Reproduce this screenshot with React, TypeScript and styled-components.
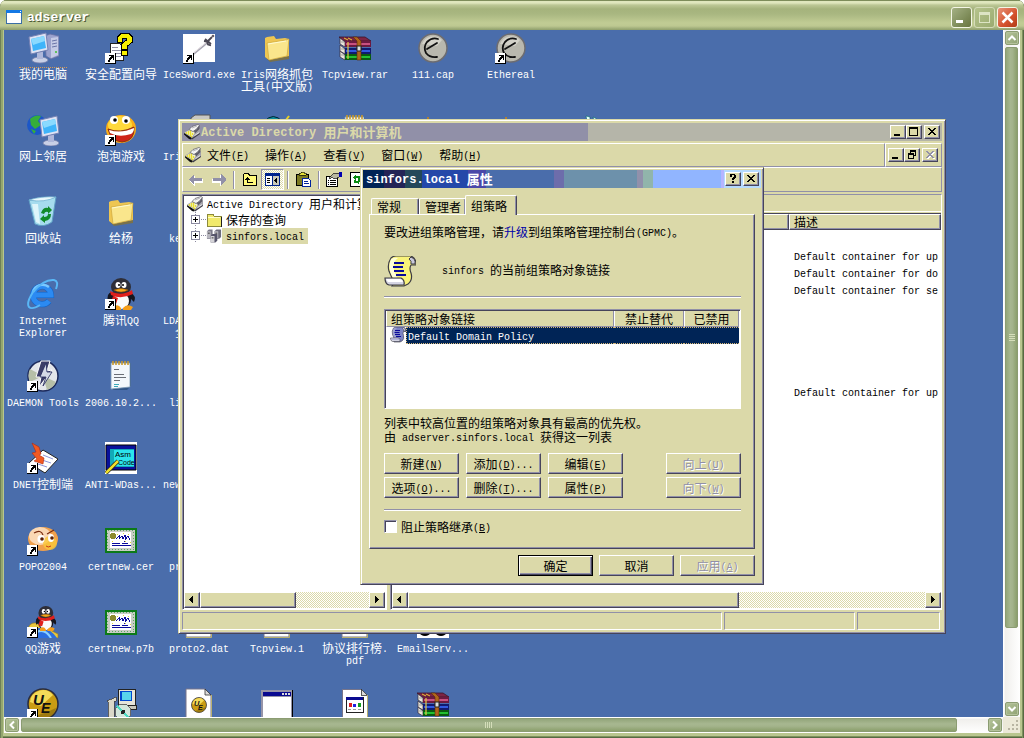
import React from "react";
import styled, { createGlobalStyle, css } from "styled-components";

const c = {
  face: "#dbd9a9",
  white: "#ffffff",
  shadow: "#9190a8",
  dark: "#46445a",
  desk: "#4a6dab",
  select: "#002456",
};

const GlobalStyle = createGlobalStyle`
  *, *::before, *::after { box-sizing: border-box; }
  html, body { margin: 0; background: #fff; }
  body {
    font-family: "Noto Sans CJK SC", sans-serif;
    font-size: 12px;
    line-height: 16px;
    color: #000;
  }
  button, input { font: inherit; color: inherit; margin: 0; }
  h1, h2, p { margin: 0; font-size: inherit; font-weight: inherit; }
`;

/* ---------- text: CJK runs at 12px, Latin runs in a half-width mono ---------- */

const Cjk = styled.span`
  line-height: 0;
`;
const Latin = styled.span<{ $size: number }>`
  font-family: "Liberation Mono", monospace;
  font-size: ${(p) => p.$size}px;
  line-height: 0;
  vertical-align: 1px;
`;

function T({ children, size = 10 }: { children: string; size?: number }) {
  const runs = children.split(/([^\x00-\x7f]+)/).filter(Boolean);
  return (
    <>
      {runs.map((run, i) => {
        if (/[^\x00-\x7f]/.test(run)) return <Cjk key={i}>{run}</Cjk>;
        const at = run.indexOf("&");
        return (
          <Latin key={i} $size={size}>
            {at < 0 ? (
              run
            ) : (
              <>
                {run.slice(0, at)}
                <u>{run[at + 1]}</u>
                {run.slice(at + 2)}
              </>
            )}
          </Latin>
        );
      })}
    </>
  );
}

/* ---------- shared bevels ---------- */

const raised = css`
  border: 1px solid;
  border-color: ${c.white} ${c.dark} ${c.dark} ${c.white};
  box-shadow: inset -1px -1px 0 ${c.shadow};
  background: ${c.face};
`;
const windowEdge = css`
  border: 1px solid;
  border-color: ${c.face} ${c.dark} ${c.dark} ${c.face};
  box-shadow: inset 1px 1px 0 ${c.white}, inset -1px -1px 0 ${c.shadow};
  background: ${c.face};
`;
const sunken = css`
  border: 1px solid;
  border-color: ${c.shadow} ${c.white} ${c.white} ${c.shadow};
`;
const dither = css`
  background: conic-gradient(#fff 25%, ${c.face} 0 50%, #fff 0 75%, ${c.face} 0) 0 0 / 2px 2px;
`;

/* ---------- remote session frame ---------- */

const Frame = styled.main`
  height: 100vh;
  display: flex;
  flex-direction: column;
  overflow: hidden;
  border-radius: 7px 7px 0 0;
  background: #b9c68f;
  box-shadow: inset 1px 0 0 #6e8057, inset -1px 0 0 #566a42, inset 3px 0 0 #94a66e,
    inset -2px 0 0 #7e915d, inset 0 -1px 0 #566a42, inset 0 -2px 0 #7e915d;
  padding: 0 4px 5px;
`;
const FrameTitle = styled.header`
  height: 30px;
  flex: none;
  display: flex;
  align-items: center;
  margin: 0 -4px;
  padding: 4px 6px 0 6px;
  background: linear-gradient(
    #7d8c5a 0 1px,
    #dfe6bd 1px 3px,
    #bcc795 5px,
    #a5b37c 9px,
    #a9b781 14px,
    #c1cc94 23px,
    #bdc891 26px,
    #8e9e6b 30px
  );
`;
const FrameName = styled.h1`
  flex: 1;
  padding-left: 5px;
  font-weight: bold;
  color: #fff;
  text-shadow: 1px 1px 0 #4d5a35;
`;
const FrameButtons = styled.div`
  display: flex;
  gap: 2px;
`;
const FrameButton = styled.button<{ $tone: "normal" | "faded" | "close" }>`
  width: 21px;
  height: 21px;
  padding: 0;
  display: grid;
  place-items: center;
  border: 1px solid ${(p) => (p.$tone === "faded" ? "#d5dcb8" : "#f4f6e6")};
  border-radius: 3px;
  background: ${(p) =>
    p.$tone === "close"
      ? "linear-gradient(135deg, #e8947a, #d4512c 60%, #b03c17)"
      : p.$tone === "faded"
      ? "linear-gradient(135deg, #b5c38c, #9bab70)"
      : "linear-gradient(135deg, #a5b185, #7f8d5a 60%, #69753f)"};
`;
const FrameMain = styled.div`
  flex: 1;
  min-height: 0;
  display: grid;
  grid-template-columns: minmax(0, 1fr) 17px;
  grid-template-rows: minmax(0, 1fr) 16px;
`;
const XpTrack = styled.div<{ $vertical?: boolean }>`
  display: flex;
  flex-direction: ${(p) => (p.$vertical ? "column" : "row")};
  gap: 2px;
  padding: ${(p) => (p.$vertical ? "1px 2px" : "1px")};
  background: ${(p) =>
    p.$vertical ? "linear-gradient(90deg,#fff 1px,#f0efec 2px,#fff)" : "linear-gradient(#fff 1px,#f0efec 2px,#fff)"};
`;
const XpArrow = styled.button`
  flex: none;
  width: 14px;
  height: 14px;
  padding: 0;
  display: grid;
  place-items: center;
  border: 1px solid #8b9c72;
  border-radius: 2px;
  background: linear-gradient(135deg, #b5c49a, #8fa272);
  box-shadow: inset 0 0 0 1px #b4c29b;
`;
const XpRail = styled.div<{ $vertical?: boolean }>`
  flex: 1;
  min-width: 0;
  min-height: 0;
  display: flex;
  flex-direction: ${(p) => (p.$vertical ? "column" : "row")};
`;
const XpThumb = styled.div<{ $vertical?: boolean; $share: number }>`
  flex: 0 0 ${(p) => p.$share}%;
  display: grid;
  place-items: center;
  border: 1px solid #8b9c72;
  border-radius: 2px;
  background: linear-gradient(${(p) => (p.$vertical ? "90deg" : "180deg")}, #93a57a, #a7b790 40%, #a3b38b 60%, #8b9f6c);
`;
const Corner = styled.div`
  display: grid;
  place-items: end;
  padding: 1px;
  background: #ece9d8;
`;

/* ---------- desktop ---------- */

const Desktop = styled.section`
  position: relative;
  overflow: hidden;
  background: ${c.desk};
`;
const IconGrid = styled.div`
  display: grid;
  grid-template-columns: repeat(8, 78px);
  grid-template-rows: repeat(9, 82px);
`;
const Shortcut = styled.div<{ $col: number; $row: number }>`
  grid-column: ${(p) => p.$col};
  grid-row: ${(p) => p.$row};
  display: flex;
  flex-direction: column;
  align-items: center;
  gap: 3px;
  padding-top: 2px;
  svg {
    display: block;
    flex: none;
  }
`;
const Label = styled.span<{ $width?: number; $focus?: boolean }>`
  color: #fff;
  line-height: 12px;
  white-space: pre;
  text-align: ${(p) => (p.$width ? "left" : "center")};
  width: ${(p) => (p.$width ? `${p.$width}px` : "auto")};
  border-top: 1px ${(p) => (p.$focus ? "dotted #d59a54" : "solid transparent")};
`;

/* ---------- management console ---------- */

const ConsoleWindow = styled.section`
  ${windowEdge}
  position: absolute;
  left: 174px;
  top: 89px;
  width: 768px;
  height: 515px;
  padding: 3px;
  display: flex;
  flex-direction: column;
`;
const CaptionBar = styled.header<{ $active?: boolean }>`
  flex: none;
  height: 18px;
  display: flex;
  align-items: center;
  padding: 0 2px;
  font-weight: bold;
  color: ${(p) => (p.$active ? "#fff" : c.face)};
  background: ${(p) =>
    p.$active
      ? `linear-gradient(90deg, #002456 21px, #242456 0 42px, #24485a 0 59px, #2448a9 0 105px,
          #4a48a9 0 123px, #4a6dab 0 191px, #6d6dab 0 201px, #6d91ab 0 274px, #9191ab 0 280px,
          #91b5ab 0 290px, #91b5ff 0 358px, #b5b5ff 0 361px, #b5daff 0)`
      : `linear-gradient(90deg, ${c.shadow} 406px, #b5b5a9 0)`};
  svg {
    flex: none;
  }
`;
const CaptionText = styled.h2`
  flex: 1;
  font-size: 13px;
  font-weight: bold;
  white-space: pre;
  padding-left: 1px;
`;
const CaptionButtons = styled.div`
  display: flex;
  button:last-child {
    margin-left: 2px;
  }
`;
const CaptionButton = styled.button`
  ${raised}
  width: 16px;
  height: 14px;
  padding: 0;
  display: grid;
  place-items: center;
`;
const MenuBand = styled.div`
  flex: none;
  height: 24px;
  margin-top: 2px;
  display: flex;
`;
const MenuBar = styled.nav`
  flex: 1;
  display: flex;
  align-items: center;
  gap: 16px;
  padding: 0 2px;
  border: 1px solid;
  border-color: ${c.white} ${c.shadow} ${c.shadow} ${c.white};
`;
const MenuItem = styled.button`
  border: 0;
  padding: 0;
  background: none;
  white-space: nowrap;
`;
const MenuIcon = styled.span`
  display: flex;
  width: 16px;
  margin-right: -10px;
`;
const MdiButtons = styled(CaptionButtons)`
  align-items: center;
  padding: 0 3px 0 2px;
  border: 1px solid;
  border-color: ${c.white} ${c.shadow} ${c.shadow} ${c.white};
`;
const ToolBar = styled.div`
  flex: none;
  height: 25px;
  display: flex;
  align-items: center;
  padding-left: 1px;
  border: 1px solid;
  border-color: ${c.white} ${c.shadow} ${c.shadow} ${c.white};
`;
const ToolButton = styled.button<{ $pressed?: boolean }>`
  width: 23px;
  height: 21px;
  padding: 0;
  display: grid;
  place-items: center;
  border: 1px solid transparent;
  background: none;
  ${(p) => p.$pressed && sunken}
  ${(p) => p.$pressed && dither}
`;
const ToolSeparator = styled.span`
  width: 2px;
  height: 18px;
  margin: 0 3px;
  border-left: 1px solid ${c.shadow};
  border-right: 1px solid ${c.white};
`;
const Panes = styled.div`
  flex: 1;
  min-height: 0;
  display: flex;
  gap: 3px;
  margin: 2px 0;
`;
const pane = css`
  display: flex;
  flex-direction: column;
  border: 1px solid;
  border-color: ${c.shadow} ${c.white} ${c.white} ${c.shadow};
`;
const TreePane = styled.div`
  ${pane}
  flex: 0 0 205px;
  background: #fff;
  box-shadow: inset 1px 1px 0 ${c.dark};
  padding: 1px;
`;
const Tree = styled.ul`
  flex: 1;
  min-height: 0;
  overflow: hidden;
  list-style: none;
  margin: 0;
  padding: 0;
`;
const TreeRow = styled.li<{ $child?: boolean }>`
  height: 16px;
  display: flex;
  align-items: center;
  white-space: pre;
  padding-left: ${(p) => (p.$child ? 7 : 3)}px;
  svg {
    flex: none;
  }
`;
const TreeText = styled.span<{ $selected?: boolean }>`
  padding: 0 4px;
  background: ${(p) => (p.$selected ? c.face : "none")};
`;
const DetailPane = styled.div`
  ${pane}
  flex: 1;
  min-width: 0;
`;
const DetailBanner = styled.div`
  flex: none;
  height: 17px;
  border-bottom: 1px solid #fff;
`;
const DetailList = styled.div`
  flex: 1;
  min-height: 0;
  display: flex;
  flex-direction: column;
  margin-top: 1px;
  background: #fff;
  border: 0 solid ${c.dark};
  border-width: 1px 0 0 1px;
  padding-bottom: 1px;
`;
const TableBox = styled.div`
  flex: 1;
  min-height: 0;
  overflow: hidden;
`;
const DetailTable = styled.table`
  width: 100%;
  table-layout: fixed;
  border-collapse: separate;
  border-spacing: 0;
  th {
    ${raised}
    height: 16px;
    padding: 0 4px;
    line-height: 14px;
    font-weight: normal;
    text-align: left;
  }
  th:first-child {
    width: 397px;
  }
  td {
    height: 17px;
    padding: 0 5px;
    overflow: hidden;
    white-space: pre;
  }
`;
const ClassicScroll = styled.div`
  ${dither}
  flex: none;
  height: 16px;
  display: flex;
`;
const ScrollArrow = styled.button`
  ${raised}
  flex: none;
  width: 16px;
  padding: 0;
  display: grid;
  place-items: center;
`;
const ScrollRail = styled.div`
  flex: 1;
  display: flex;
`;
const ScrollThumb = styled.div<{ $share: number }>`
  ${raised}
  width: ${(p) => p.$share}%;
`;
const StatusBar = styled.footer`
  flex: none;
  height: 18px;
  display: flex;
  gap: 2px;
  padding-right: 2px;
`;
const StatusCell = styled.div<{ $width?: number }>`
  ${sunken}
  flex: ${(p) => (p.$width ? `0 0 ${p.$width}px` : "1")};
`;

/* ---------- property dialog ---------- */

const Dialog = styled.section`
  ${windowEdge}
  position: absolute;
  left: 356px;
  top: 137px;
  width: 404px;
  padding: 2px;
`;
const DialogBody = styled.div`
  padding: 7px 6px 6px;
`;
const Tabs = styled.div`
  display: flex;
  align-items: flex-end;
  height: 20px;
  padding-left: 2px;
  margin-bottom: -1px;
`;
const Tab = styled.button<{ $selected?: boolean; $width: number }>`
  position: relative;
  width: ${(p) => p.$width}px;
  height: ${(p) => (p.$selected ? 20 : 16)}px;
  margin: ${(p) => (p.$selected ? "0 0 0 -1px" : "0 0 1px")};
  padding: 0 5px;
  text-align: left;
  line-height: 15px;
  white-space: nowrap;
  border: 1px solid;
  border-color: #fff ${c.dark} transparent #fff;
  border-bottom: 0;
  border-radius: 2px 2px 0 0;
  box-shadow: inset -1px 0 0 ${c.shadow};
  background: ${c.face};
`;
const TabPanel = styled.div`
  border: 1px solid;
  border-color: #fff ${c.dark} ${c.dark} #fff;
  box-shadow: inset -1px -1px 0 ${c.shadow};
  padding: 9px 13px 15px 14px;
  display: flex;
  flex-direction: column;
`;
const Upgrade = styled.a`
  color: #0000a8;
  text-decoration: none;
`;
const PolicyRow = styled.div`
  display: flex;
  gap: 26px;
  padding: 16px 0 8px;
  line-height: 28px;
  svg {
    flex: none;
  }
`;
const Etched = styled.hr`
  width: 100%;
  height: 2px;
  margin: 0;
  border: 0;
  border-top: 1px solid ${c.shadow};
  border-bottom: 1px solid #fff;
`;
const LinkBox = styled.div`
  ${sunken}
  height: 100px;
  margin: 11px 0 7px;
  padding: 1px;
  box-shadow: inset 1px 1px 0 ${c.dark};
  background: #fff;
`;
const LinkTable = styled.table`
  width: 100%;
  table-layout: fixed;
  border-collapse: separate;
  border-spacing: 0;
  th {
    height: 16px;
    padding: 0;
    line-height: 14px;
    font-weight: normal;
    background: ${c.face};
    border-bottom: 1px solid ${c.shadow};
    border-right: 1px solid ${c.shadow};
    border-left: 1px solid #fff;
  }
  th:nth-child(1) {
    width: 228px;
    padding-left: 4px;
    text-align: left;
  }
  th:nth-child(2) {
    width: 70px;
  }
  td {
    height: 17px;
    padding: 0;
    color: #fff;
    background: ${c.select};
    border: 1px dotted #d8b878;
    border-width: 1px 0;
  }
  td:first-child {
    border: 0;
    background: #fff;
  }
`;
const LinkRow = styled.div`
  display: flex;
  height: 17px;
`;
const LinkIcon = styled.span`
  display: flex;
  width: 20px;
  padding-left: 4px;
`;
const LinkName = styled.span`
  flex: 1;
  line-height: 15px;
  white-space: pre;
  padding-left: 1px;
  background: ${c.select};
  border: 1px dotted #d8b878;
  border-right: 0;
`;
const Note = styled.p`
  line-height: 14px;
`;
const ButtonGrid = styled.div`
  display: grid;
  grid-template-columns: 75px 75px 75px 1fr;
  column-gap: 7px;
  row-gap: 3px;
  margin: 9px 0 11px;
  button:nth-child(4n) {
    justify-self: end;
  }
`;
const PushButton = styled.button<{ $primary?: boolean }>`
  ${raised}
  width: 75px;
  height: 21px;
  padding: 0;
  white-space: nowrap;
  ${(p) =>
    p.$primary &&
    css`
      border-color: #000;
      box-shadow: inset 1px 1px 0 #fff, inset -1px -1px 0 ${c.dark}, inset -2px -2px 0 ${c.shadow};
    `}
  &:disabled {
    color: ${c.shadow};
    text-shadow: 1px 1px 0 #fff;
  }
`;
const CheckRow = styled.label`
  display: flex;
  align-items: center;
  gap: 4px;
  height: 13px;
  margin-top: 9px;
`;
const CheckBox = styled.input`
  appearance: none;
  width: 13px;
  height: 13px;
  ${sunken}
  box-shadow: inset 1px 1px 0 ${c.dark};
  background: #fff;
`;
const DialogButtons = styled.div`
  display: flex;
  justify-content: flex-end;
  gap: 6px;
  margin-top: 6px;
`;

/* ---------- small glyphs ---------- */

const px = { shapeRendering: "crispEdges" as const };

const MinGlyph = () => (
  <svg width="12" height="10" {...px}><path d="M2 7h6v2H2z" /></svg>
);
const MaxGlyph = () => (
  <svg width="12" height="10" {...px}><path d="M1 0h9v9H1zM2 2v6h7V2z" fillRule="evenodd" /></svg>
);
const RestoreGlyph = () => (
  <svg width="12" height="10" {...px}>
    <path d="M4 0h6v6H8V5h1V2H5v1H4zM2 3h6v6H2zM3 5v3h4V5z" fillRule="evenodd" />
  </svg>
);
const closePath = "M2 1h2v1h1v1h2V2h1V1h2v1H9v1H8v1H7v1h1v1h1v1h1v1H8V7H7V6H5v1H4v1H2V7h1V6h1V5h1V4H4V3H3V2H2z";
const CloseGlyph = ({ faded }: { faded?: boolean }) => (
  <svg width="12" height="10" {...px}>
    {faded && <path d={closePath} fill="#fff" transform="translate(1 1)" />}
    <path d={closePath} fill={faded ? c.shadow : "#000"} />
  </svg>
);
const HelpGlyph = () => (
  <svg width="12" height="10" {...px}>
    <path d="M3 0h5v1h1v3H8v1H7v1H5V4h1V3h1V1H5v2H3zM5 7h2v2H5z" />
  </svg>
);
const TriLeft = () => (
  <svg width="8" height="8" {...px}><path d="M5 0v7H4V6H3V5H2V4H1V3h1V2h1V1h1V0z" /></svg>
);
const TriRight = () => (
  <svg width="8" height="8" {...px}><path d="M2 0v7h1V6h1V5h1V4h1V3H5V2H4V1H3V0z" /></svg>
);
const Chevron = ({ turn }: { turn: number }) => (
  <svg width="10" height="10" viewBox="0 0 10 10">
    <path d="M1.500 7L5 3.500L8.500 7" fill="none" stroke="#fff" strokeWidth="2" transform={`rotate(${turn} 5 5)`} />
  </svg>
);
const Grip = ({ turn = 0 }: { turn?: number }) => (
  <svg width="8" height="8" viewBox="0 0 8 8" {...px}>
    <path d="M0 1h1v6H0zM2 1h1v6H2zM4 1h1v6H4zM6 1h1v6H6z" fill="#d5deba" transform={`rotate(${turn} 4 4)`} />
  </svg>
);

const ConsoleIcon = () => (
  <svg width="16" height="16" viewBox="0 0 16 16">
    <path d="M0 9L8 14L7 15.500L5 15L0 10.500Z" fill="#111" />
    <path d="M7 13L16 8V10L8 15.500Z" fill="#3a3944" />
    <path d="M0 8.500L6 5L14 3L16 5V9L8 14Z" fill="#a3a2aa" />
    <path d="M1 8.500L6 6L11 8.500L8 13Z" fill="#f4f1c8" />
    <path d="M2 8.500h1v1H2zM4 7.500h1v1H4zM6 8.500h1v1H6zM4 9.500h1v1H4zM8 9.500h1v1H8zM6 10.500h1v1H6zM7 12h1v1H7zM6 6.500h1v1H6z" fill="#d9cc00" stroke="#e8df20" strokeWidth=".6" />
    <path d="M5 5.500L8 2.500L14 .5L15.500 1.500L12 5.500L9 7.500Z" fill="#f4f4f2" stroke="#66656f" strokeWidth=".8" />
    <path d="M8 4L13 2" stroke="#b7b6bd" />
    <path d="M15.500 1.500V5L11 9.500L10 7L12.500 5.500Z" fill="#5d5c68" />
    <path d="M10.500 11.500L15 8.500" stroke="#f0f0f0" strokeWidth=".8" />
  </svg>
);
const SmallFolder = () => (
  <svg width="16" height="14" viewBox="0 0 16 14" {...px}>
    <path d="M1 3l1-2h5l1 2h7v10H1z" fill="#f1ea6c" stroke="#8c8a3c" />
    <path d="M2 4h12v1H2z" fill="#fffcc8" />
    <path d="M15 4v10H2" fill="none" stroke="#222" />
  </svg>
);
const DomainIcon = () => (
  <svg width="16" height="16" viewBox="0 0 17 16">
    <path d="M1 3l2-2h4v8l-2 2H1z" fill="#7a7988" />
    <path d="M1 3h4v7H1z" fill="#b8b7bf" />
    <path d="M9 3l2-2h5v8l-2 2H9z" fill="#6d6c7c" />
    <path d="M9 3h4v7H9z" fill="#c0bfc6" />
    <path d="M5 8l2-2h5v7l-2 2H5z" fill="#55546a" />
    <path d="M5 8h4v7H5z" fill="#d5d4d8" />
    <path d="M6 10h2M2 5h2M10 5h2" stroke="#333" />
  </svg>
);
const Expander = () => (
  <svg width="15" height="16" {...px}>
    <path d="M.5 3.500h8v8h-8z" fill="#fff" stroke="#8b8aa0" />
    <path d="M2 7h5v1H2zM4 5h1v5H4z" />
    <path d="M10 7h1v1h-1zM12 7h1v1h-1zM14 7h1v1h-1zM4 0h1v1H4zM4 2h1v1H4zM4 13h1v1H4z" fill="#8b8aa0" />
  </svg>
);

const ToolArrow = ({ flip }: { flip?: boolean }) => (
  <svg width="14" height="12" viewBox="0 0 14 12" {...px}>
    <g transform={flip ? "translate(14) scale(-1 1)" : undefined}>
      <path d="M1 6l5-5v4h8v4H6v4L1 7z" fill="#fff" />
      <path d="M0 5l5-5v4h8v3H5v4L0 6z" fill={c.shadow} />
    </g>
  </svg>
);
const UpFolder = () => (
  <svg width="16" height="14" viewBox="0 0 16 14" {...px}>
    <path d="M1.500 3.500v-2l1-1h4l1 2h7v10h-13z" fill="#fff97a" stroke="#000" />
    <path d="M5 4h1v1h1v1h1v1H6v2h5v1H5V7H3V6h1V5h1z" />
  </svg>
);
const TreeToggle = () => (
  <svg width="15" height="13" viewBox="0 0 15 13" {...px}>
    <path d="M.5.5h14v12H.5z" fill="#fff" stroke="#00248c" />
    <path d="M1 1h13v2H1z" fill="#00248c" />
    <path d="M2 5h3v1H2zM2 7h3v1H2zM2 9h3v1H2z" />
    <path d="M7 3h1v9H7z" fill="#00248c" />
    <path d="M8 3h6v9H8z" fill="#c9c9b8" />
    <path d="M12 4v7l-3-3.500z" />
  </svg>
);
const Paste = () => (
  <svg width="16" height="15" viewBox="0 0 16 15" {...px}>
    <path d="M.5 2.500h12v11H.5z" fill="#7c7a22" stroke="#000" />
    <path d="M3 3h7V1H8V0H5v1H3z" fill="#e4e03a" stroke="#000" strokeWidth=".6" />
    <path d="M6.500 6.500h6l2 2v6h-8z" fill="#fff" stroke="#00249c" />
    <path d="M8 9h4v1H8zM8 11h5v1H8z" fill="#00249c" />
  </svg>
);
const Properties = () => (
  <svg width="17" height="15" viewBox="0 0 17 15" {...px}>
    <path d="M.5 4.500h11v10H.5z" fill="#fff" stroke="#000" />
    <path d="M2 8h1v1H2zM4 8h6v1H4zM2 10h1v1H2zM4 10h6v1H4zM2 12h1v1H2zM4 12h6v1H4z" />
    <path d="M3 6l4-4 6-1v4l-5 2-2-2-2 2z" fill="#b9b8a0" stroke="#222" strokeWidth=".8" />
    <path d="M13 0h3v5h-3z" fill="#0000b0" />
  </svg>
);
const Refresh = () => (
  <svg width="15" height="15" viewBox="0 0 15 15" {...px}>
    <path d="M.5.5h13v14H.5z" fill="#fff" stroke="#000" />
    <path d="M3 6l3-4v2h4v3H8V6H6v2zM11 8l-3 5v-2H4V8h2v1h2V7z" fill="#0a8c14" />
  </svg>
);

const Scroll = ({ size, blue }: { size: number; blue?: boolean }) => (
  <svg width={size} height={size} viewBox="0 0 32 32">
    <path d="M7 2Q9 0 12 0H27Q31 2 32 6V9H27Q25 12 27 17Q29 24 24 28L20 30H8Q10 27 8 22L5 15Q3 8 7 2Z" fill={blue ? "#7d84c4" : "#f8f27a"} stroke="#3b3a44" strokeWidth="1.200" />
    <path d="M7 3Q11 1 14 2Q8 6 10 14L13 22H9Q3 12 7 3Z" fill={blue ? "#9ba0d0" : "#fffed8"} />
    <path d="M27 1Q32 3 31 8H27Q28 5 25 3Z" fill="#c9c9dc" stroke="#3b3a44" strokeWidth="1" />
    <path d="M1 22H17Q21 24 20 29H5Q1 28 1 22Z" fill="#d4d4e2" stroke="#3b3a44" strokeWidth="1.200" />
    <path d="M2 23H16Q19 24 19 26H4Z" fill={blue ? "#b0b3dc" : "#fff"} />
    <path d="M10 7h10M9 11h10M10 15h10M12 19h10" stroke="#0a0a9a" strokeWidth="2" />
  </svg>
);

/* ---------- desktop icons ---------- */

const Lcd = () => (
  <>
    <ellipse cx="13" cy="28" rx="8" ry="3" fill="#c9d0e6" stroke="#7b84ad" strokeWidth=".8" />
    <path d="M10 20h6v7h-6z" fill="#aeb7da" />
    <path d="M2 5l17-4 2 17L4 22z" fill="#dde3f4" stroke="#7682b4" />
    <path d="M4 7l13-3 2 12L6 19z" fill="#3fb4fa" />
    <path d="M4 7l13-3 1 5L6 13z" fill="#8adaff" />
  </>
);
const Book = ({ y, a, b }: { y: number; a: string; b: string }) => (
  <>
    <path d={`M1 ${y}l5 4v5l-5-3z`} fill="#e9e6da" stroke="#33283a" strokeWidth=".7" />
    <path d={`M6 ${y + 3}H32V${y + 9}H6z`} fill={a} />
    <path d={`M7 ${y + 5}H31V${y + 7}H7z`} fill={b} />
    <path d={`M2 ${y + 4}h3`} stroke="#888" strokeWidth=".7" />
  </>
);
const Penguin = () => (
  <>
    <path d="M3 24Q1 15 7 14L25 14Q32 18 29 24L26 21H7Z" fill="#16161e" />
    <ellipse cx="16" cy="22" rx="10" ry="9" fill="#16161e" />
    <ellipse cx="16" cy="23" rx="8" ry="8" fill="#fafafa" />
    <ellipse cx="16" cy="9" rx="10" ry="9" fill="#2e2e38" />
    <ellipse cx="13" cy="7" rx="2.500" ry="3" fill="#fff" />
    <ellipse cx="19" cy="7" rx="2.500" ry="3" fill="#fff" />
    <circle cx="14" cy="7" r="1" /><circle cx="18" cy="7" r="1" />
    <path d="M9 12Q16 9 23 12Q16 16 9 12Z" fill="#f5a81c" stroke="#a85c00" strokeWidth=".5" />
    <path d="M5 13Q16 19 27 12L28 16Q16 22 6 17ZM8 18l5 2-2 6-5-1z" fill="#e0201c" />
    <path d="M8 29q5-4 8 1v2H8zM18 30q4-5 10-1l-2 3h-8z" fill="#f59d18" />
  </>
);
const CdFace = () => (
  <>
    <circle cx="16" cy="16" r="15" fill="#e4e6ea" stroke="#1c2a5c" strokeWidth="1.500" />
    <path d="M16 16L3 9A15 15 0 0 0 3 22ZM16 16L29 22A15 15 0 0 1 20 30Z" fill="#b6bfa8" />
  </>
);
const UeBadge = () => (
  <>
    <circle cx="16" cy="16" r="15" fill="#c99c14" stroke="#2a2c3c" strokeWidth="1.500" />
    <path d="M3 14A13 13 0 0 1 26 7L14 18Z" fill="#f3da58" />
    <path d="M29 20A13 13 0 0 1 8 28L20 24Z" fill="#8a6c10" opacity=".7" />
    <text x="6" y="17" fontFamily="Liberation Sans, sans-serif" fontSize="15" fontWeight="bold" fontStyle="italic" fill="#111">U</text>
    <text x="14" y="25" fontFamily="Liberation Sans, sans-serif" fontSize="14" fontWeight="bold" fontStyle="italic" fill="#111">E</text>
  </>
);
const Page = () => (
  <>
    <path d="M3 1H22L28 7V31H3Z" fill="#fff" stroke="#77758a" />
    <path d="M22 1V7H28Z" fill="#dadada" stroke="#333" strokeWidth=".8" />
    <path d="M28.500 7V31.500H3" stroke="#b8b070" fill="none" />
  </>
);

const art: Record<string, React.ReactNode> = {
  computer: (
    <>
      <path d="M18 4l5-2 9 2v20l-8 3-5-3z" fill="#9ba2cd" stroke="#6570a4" strokeWidth=".8" />
      <path d="M24 6l7-1v18l-7 3z" fill="#c5cbe6" />
      <path d="M25 9l5-1M25 12l5-1M25 15l5-1" stroke="#6b75a8" />
      <circle cx="29" cy="20" r="1" fill="#3dbf2e" />
      <Lcd />
    </>
  ),
  wizard: (
    <g shapeRendering="crispEdges">
      <path d="M5.500 11.500h9l4 4v13h-13z" fill="#fff" stroke="#222" />
      <path d="M7 15h6M7 18h9M7 21h9M7 24h9" stroke="#8f8fa4" />
      <path d="M12.500 9V5l4-4h7l4 4v5l-5 4v3h-6v-5l5-4V6h-4v4h-5zM16.500 18.500h6v5h-6z" fill="#f8f000" stroke="#000" />
    </g>
  ),
  sword: (
    <>
      <path d="M0 2h32v28H0z" fill="#fff" />
      <path d="M8 24L25 10" stroke="#a9a7b4" strokeWidth="2.200" />
      <path d="M8 23L25 9" stroke="#efe8ea" />
      <path d="M21 9l3 .5 1 3 3 1M24 10l5-5M22 7l6 5" stroke="#4a4754" strokeWidth="1.800" fill="none" />
      <circle cx="30" cy="4" r="1.300" fill="#66606a" />
    </>
  ),
  folder: (
    <>
      <path d="M5 6l8-1 3 3 12-1v20l-19 3-4-4z" fill="#8d7424" opacity=".7" />
      <path d="M4 6l2-1 7-1 2 3 9-1 4 1v17L8 28l-4-3z" fill="#eec652" />
      <path d="M6 11l19-3 3-1-2 17-18 4z" fill="#fae68c" stroke="#c8a136" strokeWidth=".6" />
      <path d="M7 12l18-3" stroke="#fffbd2" />
    </>
  ),
  rar: (
    <>
      <path d="M0 5L5 9H32L26 5Z" fill="#7c2444" stroke="#3c1528" strokeWidth=".8" />
      <path d="M5 6l4 2M9 6l4 2" stroke="#e8c832" />
      <Book y={19} a="#0a5a10" b="#22c030" />
      <Book y={13} a="#101a70" b="#3058e0" />
      <Book y={6} a="#6c1a40" b="#c85080" />
      <path d="M8 10h2v17H8z" fill="#e3cc48" opacity=".6" />
      <path d="M14 5l4 4v19h4V9l-4-4z" fill="#b0651a" stroke="#5a2c08" strokeWidth=".6" />
      <path d="M18 14h4v5h-4z" fill="#ddd" stroke="#222" />
    </>
  ),
  ethereal: (
    <>
      <circle cx="16" cy="16" r="14" fill="#b9b8ae" stroke="#6d6c70" strokeWidth="1.500" />
      <path d="M5 12A12 12 0 0 1 25 8L20 14Z" fill="#d9d8d0" opacity=".8" />
      <path d="M21 7Q15 5 10 10Q6 15 9 21Q13 26 20 25M10 17L20 11" fill="none" stroke="#111" strokeWidth="1.800" strokeLinecap="round" />
    </>
  ),
  network: (
    <>
      <circle cx="10" cy="11" r="10" fill="#1c57c8" />
      <path d="M3 5Q8 0 14 2L11 7L14 11L8 15L4 11ZM4 15l5 2-2 3z" fill="#35ad3a" />
      <g transform="translate(11 1)"><Lcd /></g>
    </>
  ),
  smiley: (
    <>
      <ellipse cx="16" cy="15" rx="15" ry="14" fill="#fcae17" />
      <ellipse cx="15" cy="11" rx="12" ry="9" fill="#ffd93a" />
      <path d="M3 15Q15 20 29 13Q30 27 17 28Q6 27 3 15Z" fill="#cf2418" stroke="#8a3410" />
      <path d="M4 16Q16 20 29 14Q29 18 26 20Q14 24 5 19Z" fill="#fff" />
      <circle cx="9" cy="6" r="4" fill="#fff" /><circle cx="21" cy="6" r="4" fill="#fff" />
      <circle cx="10" cy="6" r="1.800" /><circle cx="21" cy="7" r="1.800" />
    </>
  ),
  bin: (
    <>
      <path d="M2 4Q14 6 29 1L25 26Q17 32 8 28Z" fill="#a6dcee" stroke="#5f9fc4" />
      <path d="M2 4Q14 0 29 1Q17 7 2 4Z" fill="#e8f8fc" stroke="#6cb0d0" strokeWidth=".7" />
      <path d="M5 8L9 26L13 28L11 8Z" fill="#e4f7fb" opacity=".9" />
      <path d="M14 17Q16 11 21 12V10l4 4-4 4v-2q-3-1-4 2zM24 18Q24 24 18 25v2l-5-4 4-4v2q4 0 4-3z" fill="#118a2a" />
    </>
  ),
  ie: (
    <>
      <path d="M7 17H24A9 9 0 1 0 22 23" fill="none" stroke="#1563c4" strokeWidth="6" />
      <path d="M7 17H24A9 9 0 1 0 22 23" fill="none" stroke="#2b8af2" strokeWidth="5" />
      <path d="M6 14A10 10 0 0 1 22 9" fill="none" stroke="#7cc8ff" strokeWidth="2.500" />
      <path d="M29 11Q32 3 27 2Q17 1 6 14Q-1 25 2 29Q5 32 13 27" fill="none" stroke="#59b7f6" strokeWidth="2" />
    </>
  ),
  penguin: <Penguin />,
  daemon: (
    <>
      <CdFace />
      <path d="M14 1h9l-3 10 5-1-13 17 2-10h-5z" fill="#3c3d68" stroke="#fff" />
      <path d="M19 3l-6 14h6l-3 9 9-14h-5z" fill="#d5d9e6" stroke="#23285c" strokeWidth=".8" />
    </>
  ),
  notepad: (
    <>
      <path d="M7 4L26 3V26L22 30H8Z" fill="#1f456e" opacity=".6" />
      <path d="M6 3H25V27L6 29Z" fill="#f3f7fb" stroke="#7c99b5" strokeWidth=".8" />
      <path d="M8 1v4M11 1v4M14 1v4M17 1v4M20 1v4M23 1v4" stroke="#c8992c" strokeWidth="1.600" />
      <path d="M9 9.500h5M9 14.500h10M9 17.500h12M9 20.500h6" stroke="#6a6e76" />
      <path d="M9 24.500h5M9 26.500h4" stroke="#39a9b8" />
    </>
  ),
  dnet: (
    <>
      <path d="M2 21L16 8L31 17L18 31Z" fill="#fff" stroke="#222" />
      <path d="M8 21l12 4M12 17l12 4M16 13l10 4" stroke="#8c96dc" />
      <path d="M5 1l7 4 2 7-2 1 5 3-1 6-9-3 3-2-5-6 4-1z" fill="#f25a22" stroke="#b02810" strokeWidth=".6" />
    </>
  ),
  asm: (
    <>
      <path d="M0 0h32v32H0z" fill="#fff" />
      <path d="M1 3h30v25H1z" fill="#0a129a" stroke="#000" />
      <path d="M5 7h24v18H5z" fill="#12a9b8" />
      <path d="M9 8h20v16H9z" fill="#2be4ec" />
      <text x="10" y="15" fontFamily="Liberation Sans, sans-serif" fontSize="8">Asm</text>
      <text x="13" y="23" fontFamily="Liberation Sans, sans-serif" fontSize="7">Code</text>
      <path d="M1 31L13 19" stroke="#222" strokeWidth="4" />
      <path d="M1 31L13 19" stroke="#efe02a" strokeWidth="2.500" />
    </>
  ),
  popo: (
    <>
      <ellipse cx="16" cy="15" rx="15" ry="12" fill="#f0a04c" />
      <ellipse cx="13" cy="12" rx="11" ry="9" fill="#fad8b4" />
      <ellipse cx="23" cy="19" rx="7" ry="7" fill="#fac838" opacity=".8" />
      <path d="M7 9Q14 5 16 11M20 10l7-4" stroke="#7a2c10" fill="none" strokeWidth="1.200" />
      <ellipse cx="14" cy="15" rx="3.500" ry="4" fill="#fff" /><ellipse cx="24" cy="14" rx="3" ry="4" fill="#fff" />
      <circle cx="15" cy="15" r="1.800" fill="#5c2208" /><circle cx="25" cy="14" r="1.800" fill="#5c2208" />
      <path d="M19 22q2 2 5 0" stroke="#c83a18" fill="none" />
    </>
  ),
  cert: (
    <g shapeRendering="crispEdges">
      <path d="M1 5h31v24H1z" />
      <path d="M.5 4.500h30v23H.5z" fill="#c9ccc4" stroke="#0c7a18" strokeWidth="2" />
      <path d="M2.500 6.500h26v19h-26z" fill="none" stroke="#5aa860" strokeDasharray="1 2" />
      <path d="M5 8h21v16H5z" fill="#fff" />
      <circle cx="8" cy="12" r="3" fill="#8c8a30" />
      <path d="M11 15l3-3v3l3-3 1 3 2-4v5l3-4 2 4M7 19h8M17 19h6M7 21h19" stroke="#0a0a9c" fill="none" />
      <path d="M12 10h1M18 9h1M23 10h1M7 17h1M20 17h1M25 18h1" stroke="#e0d838" />
    </g>
  ),
  qqgame: (
    <>
      <path d="M1 24Q2 16 9 17L31 28V32H4Q1 29 1 24Z" fill="#e9c63c" stroke="#9a7a10" strokeWidth=".6" />
      <path d="M8 23Q20 18 30 32H9Z" fill="#2c6ee0" />
      <path d="M10 26Q18 22 24 32" stroke="#8ad0ff" strokeWidth="2" fill="none" />
      <g transform="translate(7 0) scale(.74 .78)"><Penguin /></g>
    </>
  ),
  ue: <UeBadge />,
  setup: (
    <g shapeRendering="crispEdges">
      <path d="M13 1h17v16H13z" fill="#e6e4da" stroke="#222" />
      <path d="M15 3h12v10H15z" fill="#0048d0" /><path d="M17 4h9v8h-9z" fill="#58d4ec" />
      <path d="M17 17h14v4H17z" fill="#c9c8bc" stroke="#222" />
      <path d="M2 13l9-4v4h-2v19H3V14z" fill="#d9d7c8" stroke="#444" strokeWidth=".8" />
      <circle cx="18" cy="24" r="8" fill="#d4e6dc" stroke="#666" />
      <path d="M18 24L12 18M18 24L24 30" stroke="#4cd8c0" strokeWidth="2" />
      <circle cx="18" cy="24" r="2" fill="#222" />
    </g>
  ),
  uedoc: (
    <>
      <Page />
      <g transform="translate(8 9) scale(.5)"><UeBadge /></g>
    </>
  ),
  app: (
    <g shapeRendering="crispEdges">
      <path d="M0 2h32v30H0z" fill="#9694a8" /><path d="M31 2h1v30h-1z" />
      <path d="M2 4h28v4H2z" fill="#0a0a90" />
      <path d="M21 5h2v2h-2zM24 5h2v2h-2zM27 5h2v2h-2z" fill="#ddd" />
      <path d="M2 9h28v21H2z" fill="#fff" />
    </g>
  ),
  picdoc: (
    <g shapeRendering="crispEdges">
      <Page />
      <path d="M7 9h17v15H7z" fill="#fff" stroke="#222" /><path d="M7 9h17v3H7z" fill="#0a0a90" />
      <path d="M10 15h3v4h-3z" fill="#e02020" /><path d="M14 16h3v3h-3z" fill="#2020e0" /><path d="M19 15h3v4h-3z" fill="#10a020" />
      <path d="M9 21h3M14 21h3M19 21h3" stroke="#999" />
    </g>
  ),
  page: <Page />,
  server: <path d="M8 4l4-3h15v28H8z" fill="#c9c8c4" stroke="#555" />,
  teal: (
    <>
      <path d="M3 8Q12-3 22 8z" fill="#0d8a9a" stroke="#023" />
      <path d="M25 6l3-4" stroke="#e8d020" strokeWidth="2" />
    </>
  ),
  speck: <path d="M10 3h2v2h-2z" fill="#b08030" />,
  horns: <path d="M13 2l4 1v4h-3zM20 3l4 2-3 2z" fill="#e8ffff" stroke="#066" strokeWidth=".6" />,
  mail: (
    <>
      <path d="M0 4h32v28H0z" fill="#fff" />
      <ellipse cx="8" cy="27" rx="5" ry="3" /><ellipse cx="24" cy="27" rx="5" ry="3" />
    </>
  ),
};

type Entry = {
  at: [number, number];
  icon?: string;
  label?: string;
  link?: boolean;
  width?: number;
  focus?: boolean;
};

const entries: Entry[] = [
  { at: [1, 1], icon: "computer", label: "我的电脑", focus: true },
  { at: [1, 2], icon: "network", label: "网上邻居" },
  { at: [1, 3], icon: "bin", label: "回收站" },
  { at: [1, 4], icon: "ie", label: "Internet\nExplorer" },
  { at: [1, 5], icon: "daemon", label: "DAEMON Tools", link: true },
  { at: [1, 6], icon: "dnet", label: "DNET控制端", link: true },
  { at: [1, 7], icon: "popo", label: "POPO2004", link: true },
  { at: [1, 8], icon: "qqgame", label: "QQ游戏", link: true },
  { at: [1, 9], icon: "ue", link: true },
  { at: [2, 1], icon: "wizard", label: "安全配置向导", link: true },
  { at: [2, 2], icon: "smiley", label: "泡泡游戏", link: true },
  { at: [2, 3], icon: "folder", label: "给杨" },
  { at: [2, 4], icon: "penguin", label: "腾讯QQ", link: true },
  { at: [2, 5], icon: "notepad", label: "2006.10.2..." },
  { at: [2, 6], icon: "asm", label: "ANTI-WDas..." },
  { at: [2, 7], icon: "cert", label: "certnew.cer" },
  { at: [2, 8], icon: "cert", label: "certnew.p7b" },
  { at: [2, 9], icon: "setup" },
  { at: [3, 1], icon: "sword", label: "IceSword.exe", link: true },
  { at: [3, 2], icon: "server", label: "Iri", width: 72 },
  { at: [3, 3], label: "ke", width: 60 },
  { at: [3, 4], label: "LDA\n  全", width: 72 },
  { at: [3, 5], label: "li", width: 60 },
  { at: [3, 6], label: "new", width: 72 },
  { at: [3, 7], label: "pr", width: 60 },
  { at: [3, 8], icon: "page", label: "proto2.dat" },
  { at: [3, 9], icon: "uedoc" },
  { at: [4, 1], icon: "folder", label: "Iris网络抓包\n工具(中文版)" },
  { at: [4, 2], icon: "teal" },
  { at: [4, 8], icon: "page", label: "Tcpview.1" },
  { at: [4, 9], icon: "app" },
  { at: [5, 1], icon: "rar", label: "Tcpview.rar" },
  { at: [5, 2], icon: "notepad" },
  { at: [5, 8], icon: "page", label: "协议排行榜.\npdf" },
  { at: [5, 9], icon: "picdoc" },
  { at: [6, 1], icon: "ethereal", label: "111.cap" },
  { at: [6, 2], icon: "speck" },
  { at: [6, 8], icon: "mail", label: "EmailServ..." },
  { at: [6, 9], icon: "rar" },
  { at: [7, 1], icon: "ethereal", label: "Ethereal", link: true },
  { at: [7, 2], icon: "speck" },
  { at: [8, 2], icon: "horns" },
];

const LinkMark = () => (
  <g shapeRendering="crispEdges">
    <path d="M0 21h11v11H0z" />
    <path d="M0 21h10v10H0z" fill="#fff" />
    <path d="M4 23h5v5H8v-2H7v1H6v1H5v2H3v-2h1v-2h1v-1h1v-1H4z" />
  </g>
);

const descriptions = ["", "up", "do", "se", "", "", "", "", "", "up"];

const ClassicBar = ({ share }: { share: number }) => (
  <ClassicScroll>
    <ScrollArrow aria-label="向左滚动"><TriLeft /></ScrollArrow>
    <ScrollRail><ScrollThumb $share={share} /></ScrollRail>
    <ScrollArrow aria-label="向右滚动"><TriRight /></ScrollArrow>
  </ClassicScroll>
);

function Console() {
  return (
    <ConsoleWindow>
      <CaptionBar>
        <ConsoleIcon />
        <CaptionText><T size={12}>Active Directory 用户和计算机</T></CaptionText>
        <CaptionButtons>
          <CaptionButton aria-label="最小化"><MinGlyph /></CaptionButton>
          <CaptionButton aria-label="最大化"><MaxGlyph /></CaptionButton>
          <CaptionButton aria-label="关闭"><CloseGlyph /></CaptionButton>
        </CaptionButtons>
      </CaptionBar>
      <MenuBand>
        <MenuBar>
          <MenuIcon><ConsoleIcon /></MenuIcon>
          {["文件(&F)", "操作(&A)", "查看(&V)", "窗口(&W)", "帮助(&H)"].map((m) => (
            <MenuItem key={m}><T>{m}</T></MenuItem>
          ))}
        </MenuBar>
        <MdiButtons>
          <CaptionButton aria-label="最小化"><MinGlyph /></CaptionButton>
          <CaptionButton aria-label="还原"><RestoreGlyph /></CaptionButton>
          <CaptionButton aria-label="关闭" disabled><CloseGlyph faded /></CaptionButton>
        </MdiButtons>
      </MenuBand>
      <ToolBar>
        <ToolButton aria-label="后退"><ToolArrow /></ToolButton>
        <ToolButton aria-label="前进"><ToolArrow flip /></ToolButton>
        <ToolSeparator />
        <ToolButton aria-label="上一级"><UpFolder /></ToolButton>
        <ToolButton aria-label="显示树" $pressed><TreeToggle /></ToolButton>
        <ToolSeparator />
        <ToolButton aria-label="粘贴"><Paste /></ToolButton>
        <ToolSeparator />
        <ToolButton aria-label="属性"><Properties /></ToolButton>
        <ToolButton aria-label="刷新"><Refresh /></ToolButton>
      </ToolBar>
      <Panes>
        <TreePane>
          <Tree>
            <TreeRow><ConsoleIcon /><TreeText><T>Active Directory 用户和计算机</T></TreeText></TreeRow>
            <TreeRow $child><Expander /><SmallFolder /><TreeText><T>保存的查询</T></TreeText></TreeRow>
            <TreeRow $child><Expander /><DomainIcon /><TreeText $selected><T>sinfors.local</T></TreeText></TreeRow>
          </Tree>
          <ClassicBar share={57} />
        </TreePane>
        <DetailPane>
          <DetailBanner />
          <DetailList>
            <TableBox>
              <DetailTable>
                <thead>
                  <tr><th /><th><T>描述</T></th></tr>
                </thead>
                <tbody>
                  {descriptions.map((d, i) => (
                    <tr key={i}>
                      <td />
                      <td>{d && <T>{`Default container for ${d}`}</T>}</td>
                    </tr>
                  ))}
                </tbody>
              </DetailTable>
            </TableBox>
            <ClassicBar share={64} />
          </DetailList>
        </DetailPane>
      </Panes>
      <StatusBar>
        <StatusCell />
        <StatusCell $width={131} />
        <StatusCell $width={83} />
      </StatusBar>
    </ConsoleWindow>
  );
}

function PropertyDialog() {
  return (
    <Dialog role="dialog" aria-label="sinfors.local 属性">
      <CaptionBar $active>
        <CaptionText><T size={12}>sinfors.local 属性</T></CaptionText>
        <CaptionButtons>
          <CaptionButton aria-label="帮助"><HelpGlyph /></CaptionButton>
          <CaptionButton aria-label="关闭"><CloseGlyph /></CaptionButton>
        </CaptionButtons>
      </CaptionBar>
      <DialogBody>
        <Tabs role="tablist">
          <Tab role="tab" $width={48}><T>常规</T></Tab>
          <Tab role="tab" $width={47}><T>管理者</T></Tab>
          <Tab role="tab" aria-selected $selected $width={52}><T>组策略</T></Tab>
        </Tabs>
        <TabPanel role="tabpanel">
          <p>
            <T>要改进组策略管理，请</T>
            <Upgrade href="#gpmc"><T>升级</T></Upgrade>
            <T>到组策略管理控制台(GPMC)。</T>
          </p>
          <PolicyRow>
            <Scroll size={32} />
            <p><T>sinfors 的当前组策略对象链接</T></p>
          </PolicyRow>
          <Etched />
          <LinkBox>
            <LinkTable>
              <thead>
                <tr><th><T>组策略对象链接</T></th><th><T>禁止替代</T></th><th><T>已禁用</T></th></tr>
              </thead>
              <tbody>
                <tr>
                  <td>
                    <LinkRow>
                      <LinkIcon><Scroll size={16} blue /></LinkIcon>
                      <LinkName><T>Default Domain Policy</T></LinkName>
                    </LinkRow>
                  </td>
                  <td /><td />
                </tr>
              </tbody>
            </LinkTable>
          </LinkBox>
          <Note><T>列表中较高位置的组策略对象具有最高的优先权。</T></Note>
          <Note><T>由 adserver.sinfors.local 获得这一列表</T></Note>
          <ButtonGrid>
            <PushButton><T>新建(&N)</T></PushButton>
            <PushButton><T>添加(&D)...</T></PushButton>
            <PushButton><T>编辑(&E)</T></PushButton>
            <PushButton disabled><T>向上(&U)</T></PushButton>
            <PushButton><T>选项(&O)...</T></PushButton>
            <PushButton><T>删除(&T)...</T></PushButton>
            <PushButton><T>属性(&P)</T></PushButton>
            <PushButton disabled><T>向下(&W)</T></PushButton>
          </ButtonGrid>
          <Etched />
          <CheckRow>
            <CheckBox type="checkbox" />
            <span><T>阻止策略继承(&B)</T></span>
          </CheckRow>
        </TabPanel>
        <DialogButtons>
          <PushButton $primary><T>确定</T></PushButton>
          <PushButton><T>取消</T></PushButton>
          <PushButton disabled><T>应用(&A)</T></PushButton>
        </DialogButtons>
      </DialogBody>
    </Dialog>
  );
}

export default function App() {
  return (
    <>
      <GlobalStyle />
      <Frame>
        <FrameTitle>
          <svg width="16" height="14" viewBox="0 0 16 14" {...px}>
            <path d="M0 0h16v14H0z" fill="#3a6ea5" />
            <path d="M0 0h16v3H0z" fill="#1478e4" />
            <path d="M1 3h14v10H1z" fill="#fff" />
            <path d="M14 1h1v1h-1z" fill="#fff" />
          </svg>
          <FrameName><T size={13}>adserver</T></FrameName>
          <FrameButtons>
            <FrameButton $tone="normal" aria-label="最小化">
              <svg width="17" height="17" {...px}><path d="M3 11h7v3H3z" fill="#fff" /></svg>
            </FrameButton>
            <FrameButton $tone="faded" aria-label="最大化">
              <svg width="17" height="17" {...px}>
                <path d="M3 3h11v11H3zM4 6v7h9V6z" fill="#dde4c4" fillRule="evenodd" />
              </svg>
            </FrameButton>
            <FrameButton $tone="close" aria-label="关闭">
              <svg width="17" height="17"><path d="M3.500 3.500l10 10M13.500 3.500l-10 10" stroke="#fff" strokeWidth="2.500" /></svg>
            </FrameButton>
          </FrameButtons>
        </FrameTitle>
        <FrameMain>
          <Desktop>
            <IconGrid>
              {entries.map((e) => (
                <Shortcut key={e.at.join()} $col={e.at[0]} $row={e.at[1]}>
                  <svg width="32" height="32" viewBox="0 0 32 32">
                    {e.icon && art[e.icon]}
                    {e.link && <LinkMark />}
                  </svg>
                  {e.label && (
                    <Label $width={e.width} $focus={e.focus}><T>{e.label}</T></Label>
                  )}
                </Shortcut>
              ))}
            </IconGrid>
            <Console />
            <PropertyDialog />
          </Desktop>
          <XpTrack $vertical>
            <XpArrow aria-label="向上滚动"><Chevron turn={0} /></XpArrow>
            <XpRail $vertical>
              <XpThumb $vertical $share={89}><Grip turn={90} /></XpThumb>
            </XpRail>
            <XpArrow aria-label="向下滚动"><Chevron turn={180} /></XpArrow>
          </XpTrack>
          <XpTrack>
            <XpArrow aria-label="向左滚动"><Chevron turn={270} /></XpArrow>
            <XpRail>
              <XpThumb $share={97}><Grip /></XpThumb>
            </XpRail>
            <XpArrow aria-label="向右滚动"><Chevron turn={90} /></XpArrow>
          </XpTrack>
          <Corner>
            <svg width="12" height="12" {...px}>
              <path d="M9 0h2v2H9zM9 4h2v2H9zM5 4h2v2H5zM9 8h2v2H9zM5 8h2v2H5zM1 8h2v2H1z" fill="#b8b4a2" />
            </svg>
          </Corner>
        </FrameMain>
      </Frame>
    </>
  );
}
